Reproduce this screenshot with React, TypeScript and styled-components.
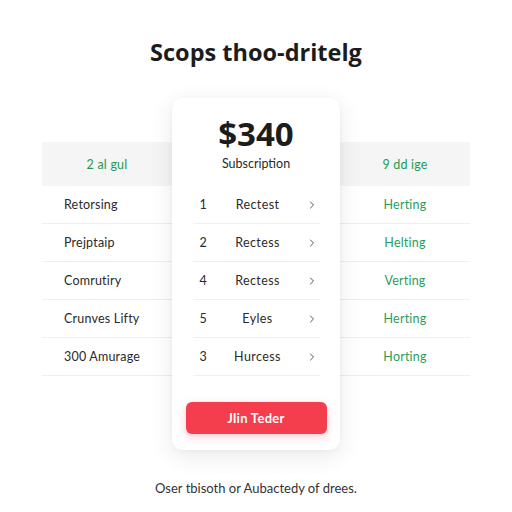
import React from 'react'
import styled, { createGlobalStyle } from 'styled-components'

const GlobalStyle = createGlobalStyle`
  html, body {
    margin: 0;
    padding: 0;
    background: #ffffff;
  }
  body {
    font-family: 'Lato', 'Open Sans', sans-serif;
    color: #222;
  }
`

const Page = styled.div`
  width: 512px;
  height: 512px;
  box-sizing: border-box;
  padding-top: 37px;
  display: flex;
  flex-direction: column;
  align-items: center;
`

const Title = styled.h1`
  margin: 0;
  font-family: 'Open Sans', 'Lato', sans-serif;
  font-size: 23.5px;
  line-height: 30px;
  font-weight: 700;
  color: #1c1c1c;
`

const Table = styled.div`
  margin-top: 31px;
  width: 428px;
  display: grid;
  grid-template-columns: 130px 168px 130px;
  align-items: start;
`

const SideColumn = styled.div`
  margin-top: 44px;
  display: flex;
  flex-direction: column;
`

const SideHeader = styled.div`
  height: 44px;
  background: #f5f5f5;
  display: flex;
  align-items: center;
  justify-content: center;
  font-size: 12.5px;
  letter-spacing: 0.2px;
  color: #1f9a55;
`

const SideRow = styled.div<{ align: 'left' | 'center' }>`
  height: 38px;
  box-sizing: border-box;
  border-bottom: 1px solid #efefef;
  display: flex;
  align-items: center;
  justify-content: ${({ align }) => (align === 'left' ? 'flex-start' : 'center')};
  padding-left: ${({ align }) => (align === 'left' ? '22px' : '0')};
  font-size: 12.5px;
  letter-spacing: 0.2px;
  color: ${({ align }) => (align === 'left' ? '#2a2a2a' : '#2a9d5c')};
`

const Card = styled.div`
  position: relative;
  z-index: 1;
  background: #fff;
  border-radius: 10px;
  box-shadow: 0 6px 24px rgba(0, 0, 0, 0.09), 0 1px 4px rgba(0, 0, 0, 0.04);
  padding: 16px 14px 16px;
  display: flex;
  flex-direction: column;
  align-items: center;
`

const Price = styled.div`
  font-family: 'Open Sans', 'Lato', sans-serif;
  font-size: 33px;
  line-height: 40px;
  font-weight: 700;
  color: #1c1c1c;
`

const Plan = styled.div`
  margin-top: 2px;
  font-size: 12.5px;
  line-height: 16px;
  color: #2a2a2a;
`

const CardRows = styled.div`
  margin-top: 14px;
  width: 127px;
  display: flex;
  flex-direction: column;
`

const CardRow = styled.div`
  height: 38px;
  box-sizing: border-box;
  border-bottom: 1px solid #f0f0f0;
  display: grid;
  grid-template-columns: 18px 1fr 18px;
  align-items: center;
  padding: 0 4px 0 7px;
  font-size: 12.5px;
  letter-spacing: 0.4px;
  color: #2a2a2a;
`

const RowNum = styled.span``

const RowLabel = styled.span`
  text-align: center;
`

const Chevron = styled.svg`
  justify-self: end;
`

const JoinButton = styled.button`
  margin-top: 26px;
  width: 141px;
  height: 32px;
  border: none;
  border-radius: 6px;
  background: #f43d4d;
  color: #fff;
  font-family: inherit;
  font-size: 13px;
  font-weight: 700;
  letter-spacing: 0.3px;
  box-shadow: 0 3px 8px rgba(244, 61, 77, 0.25);
`

const Footer = styled.p`
  margin: 29px 0 0;
  font-size: 13px;
  line-height: 18px;
  color: #333;
`

const leftRows = ['Retorsing', 'Prejptaip', 'Comrutiry', 'Crunves Lifty', '300 Amurage']
const rightRows = ['Herting', 'Helting', 'Verting', 'Herting', 'Horting']
const cardRows = [
  { n: '1', label: 'Rectest' },
  { n: '2', label: 'Rectess' },
  { n: '4', label: 'Rectess' },
  { n: '5', label: 'Eyles' },
  { n: '3', label: 'Hurcess' },
]

export default function App() {
  return (
    <>
      <GlobalStyle />
      <Page>
        <Title>Scops thoo-dritelg</Title>
        <Table>
          <SideColumn>
            <SideHeader>2 al gul</SideHeader>
            {leftRows.map((r) => (
              <SideRow key={r} align="left">
                {r}
              </SideRow>
            ))}
          </SideColumn>
          <Card>
            <Price>$340</Price>
            <Plan>Subscription</Plan>
            <CardRows>
              {cardRows.map((r) => (
                <CardRow key={r.n}>
                  <RowNum>{r.n}</RowNum>
                  <RowLabel>{r.label}</RowLabel>
                  <Chevron width="8" height="10" viewBox="0 0 8 10">
                    <path d="M2.5 2 L5.5 5 L2.5 8" fill="none" stroke="#555" strokeWidth="1" strokeLinecap="round" strokeLinejoin="round" />
                  </Chevron>
                </CardRow>
              ))}
            </CardRows>
            <JoinButton>Jlin Teder</JoinButton>
          </Card>
          <SideColumn>
            <SideHeader>9 dd ige</SideHeader>
            {rightRows.map((r, i) => (
              <SideRow key={i} align="center">
                {r}
              </SideRow>
            ))}
          </SideColumn>
        </Table>
        <Footer>Oser tbisoth or Aubactedy of drees.</Footer>
      </Page>
    </>
  )
}
